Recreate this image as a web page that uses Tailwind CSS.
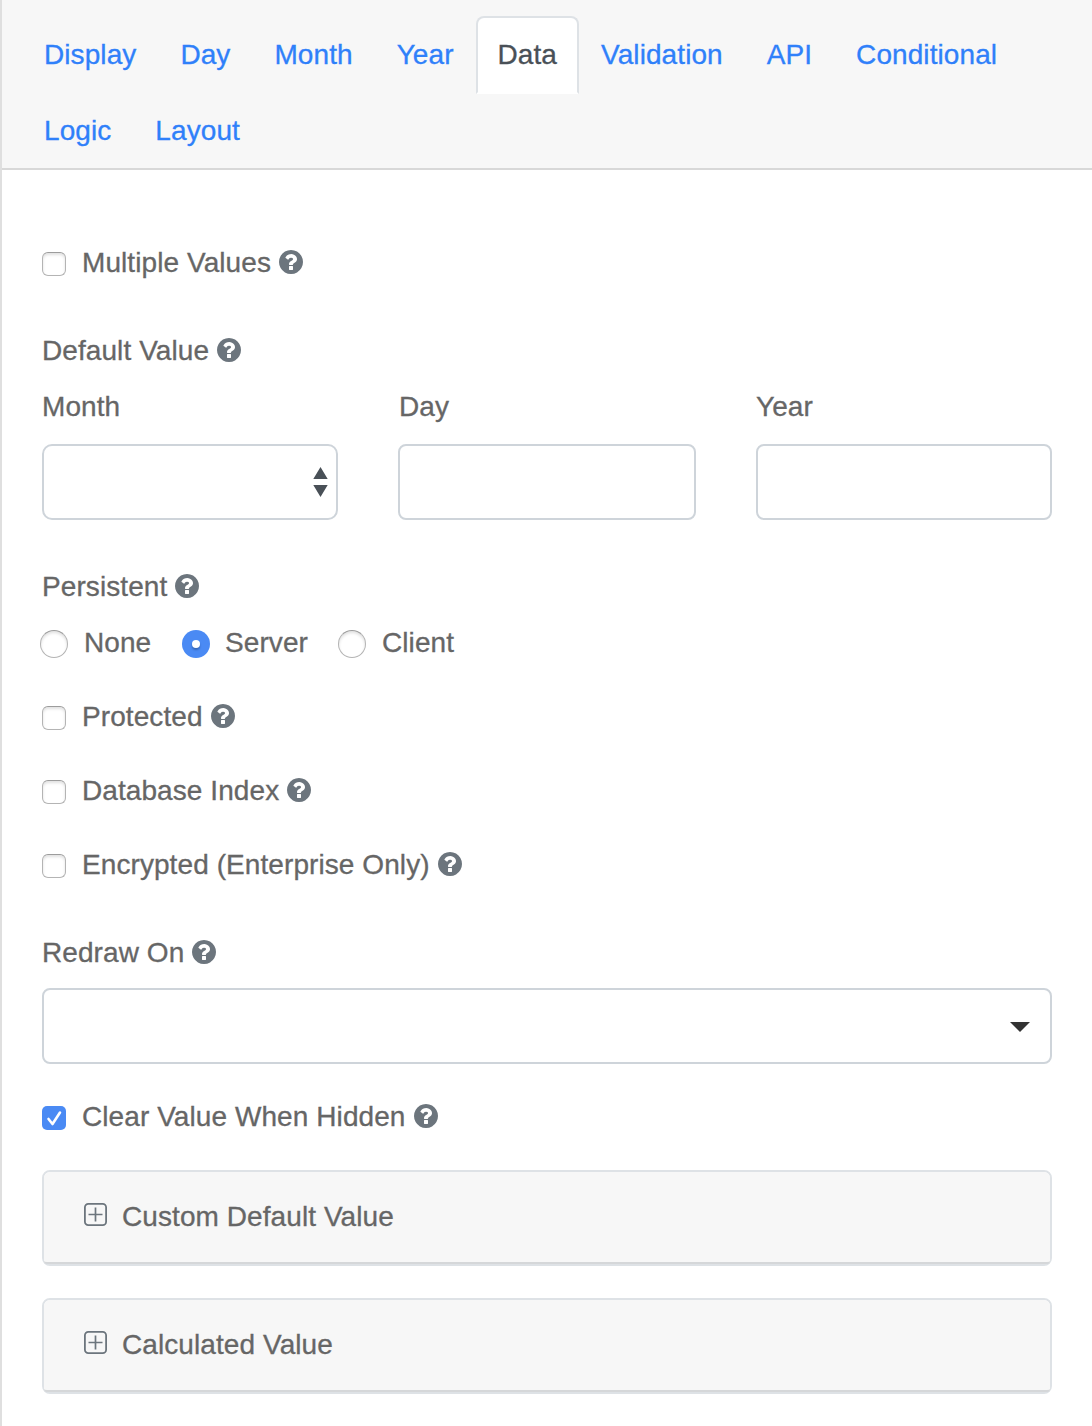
<!DOCTYPE html>
<html lang="en">
<head>
<meta charset="utf-8">
<title>Data settings</title>
<script src="https://cdn.jsdelivr.net/npm/@tailwindcss/browser@4"></script>
</head>
<body class="bg-white">
<svg class="hidden">
  <symbol id="help" viewBox="128 128 1536 1536"><path fill="currentColor" d="M1024 1376v-192q0-14-9-23t-23-9h-192q-14 0-23 9t-9 23v192q0 14 9 23t23 9h192q14 0 23-9t9-23zm256-672q0-88-55.500-163t-138.500-116-170-41q-243 0-371 213-15 24 8 42l132 100q7 6 19 6 16 0 25-12 53-68 86-92 34-24 86-24 48 0 85.500 26t37.500 59q0 38-20 61t-68 45q-63 28-115.500 86.500t-52.500 125.500v36q0 14 9 23t23 9h192q14 0 23-9t9-23q0-19 21.500-49.500t54.500-49.500q32-18 49-28.500t46-35 44.500-48 28-60.500 12.500-81zm384 192q0 209-103 385.500t-279.500 279.500-385.500 103-385.500-103-279.500-279.500-103-385.500 103-385.500 279.500-279.500 385.500-103 385.500 103 279.500 279.500 103 385.500z"/></symbol>
  <symbol id="plus" viewBox="0 0 23 23"><g fill="none" stroke="currentColor"><rect x="0.9" y="0.9" width="21.2" height="21.2" rx="3.4" stroke-width="1.8"/><path d="M11.5 4.500v14M4.500 11.500h14" stroke-width="1.7"/></g></symbol>
</svg>
<main class="h-[1426px] overflow-hidden border-l-2 border-[#dfdfdf] font-['Liberation_Sans',Arial,sans-serif] text-[28px] leading-[42px] tracking-[0.08px] text-[#666] [-webkit-text-stroke:0.3px]">
  <nav class="flex h-[170px] flex-wrap content-start border-b-2 border-[#d8d8d8] bg-[#f7f7f7] pt-4 pl-5 pr-5 text-[#2f80fa]">
    <a class="-mb-0.5 h-[78px] border-2 border-transparent px-5 py-4">Display</a>
    <a class="-mb-0.5 h-[78px] border-2 border-transparent px-5 py-4">Day</a>
    <a class="-mb-0.5 h-[78px] border-2 border-transparent px-5 py-4">Month</a>
    <a class="-mb-0.5 h-[78px] border-2 border-transparent px-5 py-4">Year</a>
    <a class="-mb-0.5 h-[78px] rounded-t-lg border-2 border-[#dee2e6] border-b-white bg-white px-5 py-4 text-[#495057]">Data</a>
    <a class="-mb-0.5 h-[78px] border-2 border-transparent px-5 py-4">Validation</a>
    <a class="-mb-0.5 h-[78px] border-2 border-transparent px-5 py-4">API</a>
    <a class="-mb-0.5 h-[78px] border-2 border-transparent px-5 py-4">Conditional</a>
    <div class="h-0 basis-full"></div>
    <a class="-mb-0.5 h-[78px] border-2 border-transparent px-5 py-4">Logic</a>
    <a class="-mb-0.5 h-[78px] border-2 border-transparent px-5 py-4">Layout</a>
  </nav>
  <form class="flex flex-col pt-[72px] pr-10 pl-10">
    <label class="flex h-[42px]"><i class="mt-[10px] mr-4 size-6 rounded-[6px] border border-[#b4b4b4] border-t-[#9c9c9c] bg-white shadow-[inset_0_2px_3px_rgba(0,0,0,0.12)]"></i><span>Multiple Values</span><svg class="mt-2 ml-2 size-6 text-[#6c757d]"><use href="#help"/></svg></label>
    <div class="mt-[46px] flex h-[42px]"><span>Default Value</span><svg class="mt-2 ml-2 size-6 text-[#6c757d]"><use href="#help"/></svg></div>
    <div class="mt-[14px] flex justify-between">
      <div class="w-[296px]"><div>Month</div>
        <div class="mt-4 flex h-[76px] items-center justify-end rounded-[10px] border-2 border-[#ced4da] pr-2"><svg class="h-[30px] w-[15px]" viewBox="0 0 15 30"><path fill="#495057" d="M7.500 0 14.700 12H.3zM.3 18h14.400L7.500 30z"/></svg></div></div>
      <div class="w-[298px]"><div class="pl-px">Day</div><div class="mt-4 h-[76px] rounded-lg border-2 border-[#ced4da]"></div></div>
      <div class="w-[296px]"><div>Year</div><div class="mt-4 h-[76px] rounded-lg border-2 border-[#ced4da]"></div></div>
    </div>
    <div class="mt-[46px] flex h-[42px]"><span>Persistent</span><svg class="mt-2 ml-2 size-6 text-[#6c757d]"><use href="#help"/></svg></div>
    <div class="mt-[14px] flex h-[42px]">
      <i class="mt-2 -ml-0.5 size-7 rounded-full border border-[#b4b4b4] border-t-[#9c9c9c] bg-white shadow-[inset_0_2px_3px_rgba(0,0,0,0.12)]"></i><span class="ml-4 w-[98px]">None</span>
      <i class="mt-2 flex size-7 items-center justify-center rounded-full bg-[#4a8af4]"><b class="size-2 rounded-full bg-white shadow-[0_2px_2px_rgba(0,0,0,0.25)]"></b></i><span class="ml-[15px] w-[113px]">Server</span>
      <i class="mt-2 size-7 rounded-full border border-[#b4b4b4] border-t-[#9c9c9c] bg-white shadow-[inset_0_2px_3px_rgba(0,0,0,0.12)]"></i><span class="ml-4">Client</span>
    </div>
    <label class="mt-8 flex h-[42px]"><i class="mt-[10px] mr-4 size-6 rounded-[6px] border border-[#b4b4b4] border-t-[#9c9c9c] bg-white shadow-[inset_0_2px_3px_rgba(0,0,0,0.12)]"></i><span>Protected</span><svg class="mt-2 ml-2 size-6 text-[#6c757d]"><use href="#help"/></svg></label>
    <label class="mt-8 flex h-[42px]"><i class="mt-[10px] mr-4 size-6 rounded-[6px] border border-[#b4b4b4] border-t-[#9c9c9c] bg-white shadow-[inset_0_2px_3px_rgba(0,0,0,0.12)]"></i><span>Database Index</span><svg class="mt-2 ml-2 size-6 text-[#6c757d]"><use href="#help"/></svg></label>
    <label class="mt-8 flex h-[42px]"><i class="mt-[10px] mr-4 size-6 rounded-[6px] border border-[#b4b4b4] border-t-[#9c9c9c] bg-white shadow-[inset_0_2px_3px_rgba(0,0,0,0.12)]"></i><span>Encrypted (Enterprise Only)</span><svg class="mt-2 ml-2 size-6 text-[#6c757d]"><use href="#help"/></svg></label>
    <div class="mt-[46px] flex h-[42px]"><span>Redraw On</span><svg class="mt-2 ml-2 size-6 text-[#6c757d]"><use href="#help"/></svg></div>
    <div class="mt-[14px] flex h-[76px] items-center justify-end rounded-lg border-2 border-[#ced4da] pr-5"><svg class="mt-0.5 h-[10px] w-5" viewBox="0 0 20 10"><path fill="#333" d="M0 0h20L10 10z"/></svg></div>
    <label class="mt-8 flex h-[42px]"><i class="mt-[10px] mr-4 size-6 rounded-[5px] bg-[#4a8af4]"><svg viewBox="0 0 24 24"><path fill="none" stroke="#fff" stroke-width="2.600" stroke-linecap="round" stroke-linejoin="round" d="m6.500 13 4 5L18 6.500"/></svg></i><span>Clear Value When Hidden</span><svg class="mt-2 ml-2 size-6 text-[#6c757d]"><use href="#help"/></svg></label>
    <section class="mt-8 h-24 rounded-lg border-2 border-[#dee2e6]"><div class="flex h-[92px] rounded-t-[6px] rounded-b-[3px] border-b-2 border-[#d5d7d9] bg-[#f7f7f7] pt-6 pl-10"><svg class="mt-[7px] mr-[15px] size-[23px] text-[#6c757d]"><use href="#plus"/></svg><span>Custom Default Value</span></div></section>
    <section class="mt-8 h-24 rounded-lg border-2 border-[#dee2e6]"><div class="flex h-[92px] rounded-t-[6px] rounded-b-[3px] border-b-2 border-[#d5d7d9] bg-[#f7f7f7] pt-6 pl-10"><svg class="mt-[7px] mr-[15px] size-[23px] text-[#6c757d]"><use href="#plus"/></svg><span>Calculated Value</span></div></section>
  </form>
</main>
</body>
</html>
